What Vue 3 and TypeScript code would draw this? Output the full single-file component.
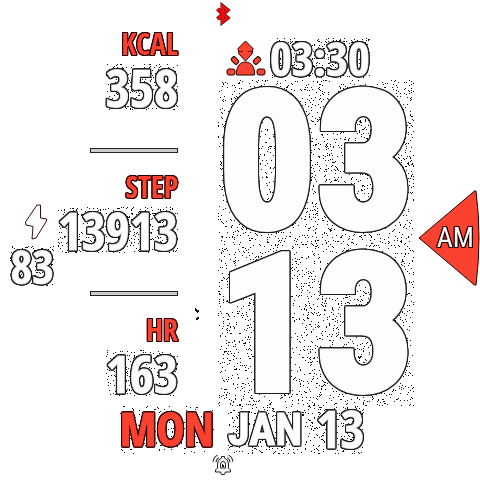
<script setup lang="ts">
interface Stat {
  label: string
  value: string
}

const stats: Stat[] = [
  { label: 'KCAL', value: '358' },
  { label: 'STEP', value: '13913' },
  { label: 'HR', value: '163' },
]

const hours = '03'
const minutes = '13'
const digits = [...hours, ...minutes]

/** Path of scattered one-pixel dots filling a width x height box. */
function grain(width: number, height: number, density: number, seed: number): string {
  let state = seed
  const next = (): number => {
    state = (state * 1664525 + 1013904223) % 4294967296
    return state / 4294967296
  }
  const parts: string[] = []
  const count = Math.round(width * height * density)
  for (let i = 0; i < count; i++) {
    const x = Math.floor(next() * width)
    const y = Math.floor(next() * height)
    parts.push(`M${x} ${y}h1v1h-1z`)
  }
  return parts.join('')
}

const clockGrain = grain(196, 326, 0.07, 7)
const valueGrain = stats.map((s, i) => grain(s.value.length * 24, 46, 0.09, 31 + i))
const timeGrain = grain(100, 40, 0.1, 53)
const batteryGrain = grain(42, 38, 0.09, 71)
const dayGrain = grain(90, 46, 0.04, 83)
const dateGrain = grain(134, 46, 0.08, 97)
</script>

<template>
  <main class="face">
    <header class="top">
      <svg class="bluetooth" viewBox="0 0 18 24" role="img" aria-label="Bluetooth">
        <path class="halo" d="M3.500 7L13.500 16L8.500 20V4L13.500 8L3.500 17" />
        <path class="rune" d="M3.500 7L13.500 16L8.500 20V4L13.500 8L3.500 17" />
      </svg>
    </header>

    <div class="body">
      <section class="battery" aria-label="Battery">
        <svg class="bolt" viewBox="0 0 24 37" aria-hidden="true">
          <path d="M13 1H16.500V14L22.500 15V17L12 34L8 35L9 22.500L2 21L1.500 18Z" />
        </svg>
        <span class="grained">
          <svg class="grain" viewBox="0 0 42 38" preserveAspectRatio="xMidYMid slice" aria-hidden="true"><path :d="batteryGrain" /></svg>
          <span class="num mid">83</span>
        </span>
      </section>

      <section class="stats">
        <div v-for="(s, i) in stats" :key="s.label" class="stat">
          <span class="label">{{ s.label }}</span>
          <span class="grained">
            <svg class="grain inset" :viewBox="`0 0 ${s.value.length * 24} 46`" preserveAspectRatio="xMidYMid slice" aria-hidden="true"><path :d="valueGrain[i]" /></svg>
            <span class="num value">{{ s.value }}</span>
          </span>
        </div>
      </section>

      <section class="clock">
        <svg class="ticks" viewBox="0 0 6 14" aria-hidden="true">
          <path d="M1 0h1v1h1v1h2v2h-1v1h-1v-1h-1v-1h-1zM2 10h1v-1h2v2h-1v1h-2z" />
        </svg>
        <div class="second">
          <svg class="person" viewBox="0 0 40 37" aria-hidden="true">
            <path d="M19.500 1L27 8.500L26 14L19.500 21L13 14L12 8.500Z" />
            <path d="M10.500 35V32C11 25.500 15 22 19.500 22S28 25.500 28.500 32V35Z" />
            <rect x="1" y="29" width="8" height="6" rx="2" />
            <rect x="31" y="29" width="8" height="6" rx="2" />
            <rect x="5" y="18" width="8" height="5" rx="2" transform="rotate(45 9 20.5)" />
            <rect x="27" y="18" width="8" height="5" rx="2" transform="rotate(-45 31 20.5)" />
            <path class="visor" d="M13 11.500h4M22 11.500h4" />
          </svg>
          <span class="grained">
            <svg class="grain" viewBox="0 0 100 40" preserveAspectRatio="xMidYMid slice" aria-hidden="true"><path :d="timeGrain" /></svg>
            <span class="num mid">03:30</span>
          </span>
        </div>
        <div class="digits">
          <svg class="grain" viewBox="0 0 196 326" preserveAspectRatio="xMidYMid slice" aria-hidden="true"><path :d="clockGrain" /></svg>
          <span v-for="(d, i) in digits" :key="i" class="digit">{{ d }}</span>
        </div>
      </section>

      <section class="period">
        <svg viewBox="0 0 62 98" aria-hidden="true">
          <path d="M1 49L56.500 2L58 2Q61 26 61 49T58 96L56.500 96Z" />
        </svg>
        <span>AM</span>
      </section>
    </div>

    <div class="date">
      <span class="grained day">
        <svg class="grain" viewBox="0 0 90 46" preserveAspectRatio="xMidYMid slice" aria-hidden="true"><path :d="dayGrain" /></svg>
        <span class="weekday">MON</span>
      </span>
      <span class="grained month">
        <svg class="grain" viewBox="0 0 134 46" preserveAspectRatio="xMidYMid slice" aria-hidden="true"><path :d="dateGrain" /></svg>
        <span class="num name">JAN</span>
        <span class="num value">13</span>
      </span>
    </div>

    <footer class="bottom">
      <svg class="bell" viewBox="0 0 22 22" role="img" aria-label="Alarm">
        <path class="arc dark" d="M2.500 8Q3 4 6 2.500M19.500 8Q19 4 16 2.500" />
        <path class="arc" d="M2.500 8Q3 4 6 2.500M19.500 8Q19 4 16 2.500" />
        <path class="shell" d="M9.500 2.500H12.500V4Q16.500 5.500 16.500 10V14L18.500 16V18H13.500L12.500 20.500H9.500L8.500 18H3.500V16L5.500 14V10Q5.500 5.500 9.500 4Z" />
        <path class="hollow" d="M8.500 14V10.500Q8.500 7.500 11 7.500T13.500 10.500V14Z" />
        <path class="clapper" d="M10 10h1v1h1v2h-2z" />
      </svg>
    </footer>
  </main>
</template>

<style>
body {
  margin: 0;
  background: #fff;
}
</style>

<style scoped>
.face {
  --ink: #1c1c1c;
  --red: #fb4230;
  display: flex;
  flex-direction: column;
  min-height: 100vh;
  overflow: hidden;
  background: #fff;
  color: #fdfdfd;
  font-family: "Open Sans Condensed", "Roboto Condensed", "Liberation Sans", sans-serif;
  font-weight: 700;
}

svg {
  display: block;
}

.top {
  height: 28px;
  padding: 2px 0 0 214px;
  box-sizing: border-box;
}

.bluetooth {
  width: 18px;
  height: 24px;
  fill: none;
}

.halo {
  stroke: #300;
  stroke-width: 4;
}

.rune {
  stroke: #f50808;
  stroke-width: 3;
}

.body {
  display: grid;
  grid-template-columns: 54px 124px 1fr 62px;
}

.grained {
  position: relative;
  display: block;
}

.grain {
  position: absolute;
  inset: 0;
  width: 100%;
  height: 100%;
  fill: #111;
  shape-rendering: crispEdges;
}

.grain.inset {
  inset: 4px 0;
  height: 46px;
}

.num,
.weekday,
.label,
.digit,
.period span {
  position: relative;
  display: block;
  white-space: nowrap;
  paint-order: stroke fill;
  filter: drop-shadow(1px 0 var(--ink)) drop-shadow(-1px 0 var(--ink)) drop-shadow(0 1px var(--ink)) drop-shadow(0 -1px var(--ink));
}

.weekday,
.label,
.period span {
  --ink: #2a0000;
}

.num {
  -webkit-text-stroke: 1px #ccc;
}

.mid {
  font-size: 47px;
  line-height: 40px;
}

.value {
  font-size: 52px;
  line-height: 54px;
}

.battery {
  display: flex;
  flex-direction: column;
  align-items: flex-end;
  padding-top: 176px;
}

.battery .grained {
  margin-top: 5px;
}

.bolt {
  width: 24px;
  height: 37px;
  margin-right: 6px;
  fill: #fdfdfd;
  stroke: #311;
  stroke-width: 1;
}

.stats {
  display: flex;
  flex-direction: column;
  align-items: flex-end;
}

.stat {
  display: flex;
  flex-direction: column;
  align-items: flex-end;
}

.stat:not(:last-child)::after {
  content: "";
  width: 86px;
  height: 3px;
  margin: 34px 0 18px;
  border: 1px solid #222;
  background: #ccc;
}

.label {
  color: var(--red);
  font-size: 30px;
  line-height: 32px;
}

.clock {
  position: relative;
  display: flex;
  flex-direction: column;
  padding: 8px 4px 0 40px;
}

.ticks {
  position: absolute;
  left: 16px;
  top: 280px;
  width: 6px;
  height: 14px;
  fill: #111;
}

.second {
  display: flex;
  align-items: center;
  gap: 4px;
  height: 44px;
  padding-left: 8px;
}

.person {
  width: 40px;
  height: 37px;
  fill: var(--red);
  stroke: #200;
  stroke-width: 1;
}

.person .visor {
  stroke: #811;
}

.digits {
  position: relative;
  display: grid;
  grid-template-columns: repeat(2, minmax(0, 1fr));
  justify-items: center;
}

.digit {
  height: 163px;
  font-family: "Roboto Condensed", "Open Sans Condensed", "Liberation Sans", sans-serif;
  font-size: 188px;
  font-weight: 700;
  line-height: 164px;
  -webkit-text-stroke: 8px #fdfdfd;
}

.period {
  display: grid;
  align-content: start;
  padding-top: 161px;
}

.period svg,
.period span {
  grid-area: 1 / 1;
}

.period svg {
  width: 62px;
  height: 98px;
  fill: var(--red);
  stroke: #200;
  stroke-width: 1;
}

.period span {
  align-self: center;
  justify-self: end;
  padding-right: 6px;
  font-family: "Roboto Condensed", "Liberation Sans", sans-serif;
  font-size: 28px;
  font-weight: 400;
  line-height: 32px;
}

.date {
  display: grid;
  grid-template-columns: 214px 1fr;
  gap: 14px;
  height: 48px;
}

.day {
  justify-self: end;
}

.weekday {
  color: var(--red);
  font-size: 47px;
  line-height: 44px;
  -webkit-text-stroke: 1px var(--red);
}

.month {
  display: flex;
  gap: 14px;
  justify-self: start;
}

.month .num {
  line-height: 44px;
}

.month .name {
  font-family: "Roboto Condensed", "Open Sans Condensed", "Liberation Sans", sans-serif;
  font-size: 44px;
  line-height: 48px;
  -webkit-text-stroke-color: #fdfdfd;
}

.bottom {
  padding-left: 212px;
}

.bell {
  width: 22px;
  height: 22px;
  fill: none;
}

.arc {
  stroke: #eee;
  stroke-width: 2;
}

.arc.dark {
  stroke: #222;
  stroke-width: 4;
}

.shell {
  fill: #f4f4f4;
  stroke: #222;
  stroke-width: 1;
}

.hollow {
  fill: #fff;
  stroke: #222;
  stroke-width: 1;
}

.clapper {
  fill: #111;
}
</style>
